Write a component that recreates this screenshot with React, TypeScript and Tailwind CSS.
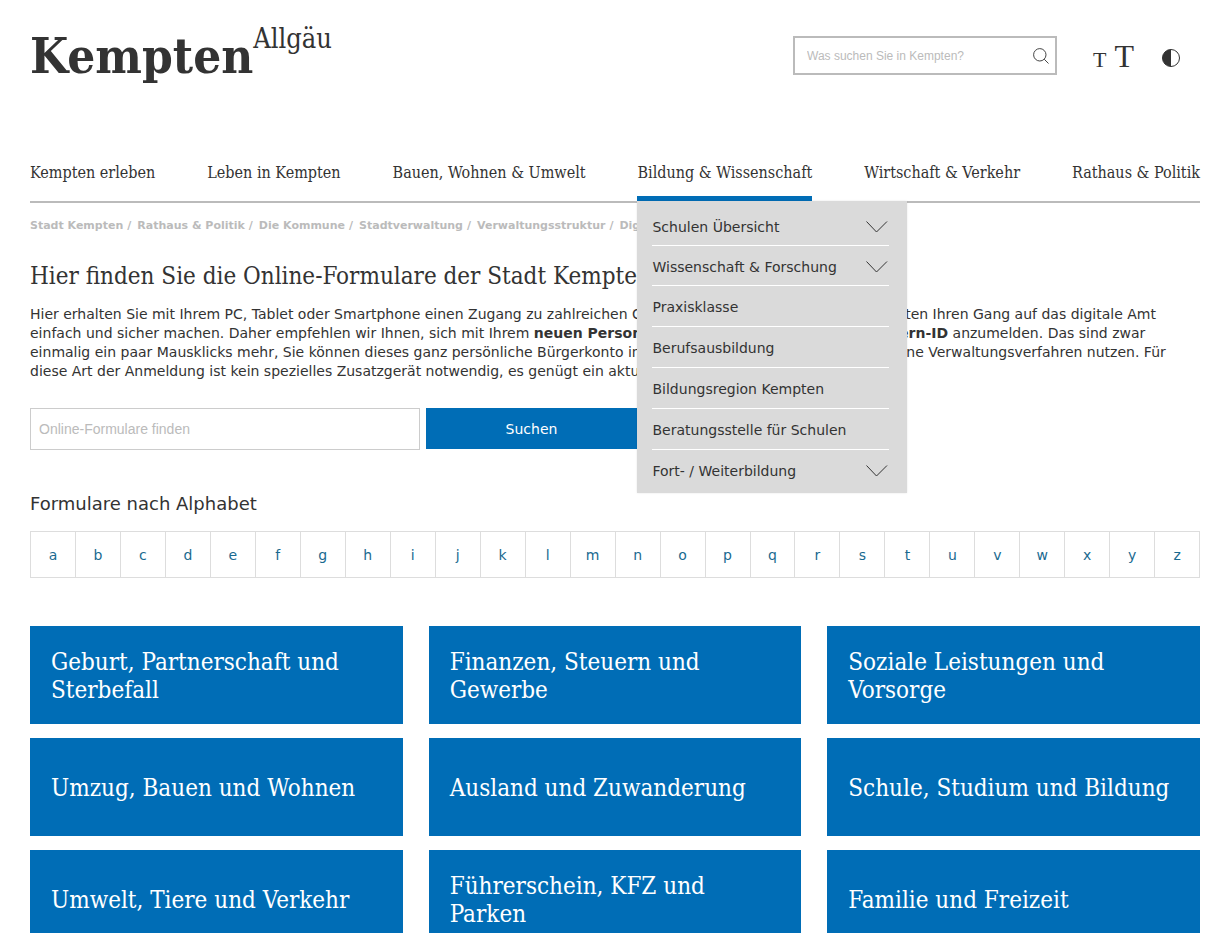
import { useState } from "react";

const serif = "font-['DejaVu_Serif_Condensed','Liberation_Serif',serif]";
const sans = "font-['DejaVu_Sans',sans-serif]";

const navItems = [
  "Kempten erleben",
  "Leben in Kempten",
  "Bauen, Wohnen & Umwelt",
  "Bildung & Wissenschaft",
  "Wirtschaft & Verkehr",
  "Rathaus & Politik",
];

const menuItems = [
  { label: "Schulen Übersicht", expandable: true },
  { label: "Wissenschaft & Forschung", expandable: true },
  { label: "Praxisklasse", expandable: false },
  { label: "Berufsausbildung", expandable: false },
  { label: "Bildungsregion Kempten", expandable: false },
  { label: "Beratungsstelle für Schulen", expandable: false },
  { label: "Fort- / Weiterbildung", expandable: true },
];

const crumbs = [
  "Stadt Kempten",
  "Rathaus & Politik",
  "Die Kommune",
  "Stadtverwaltung",
  "Verwaltungsstruktur",
  "Digitales Amt",
];

const topics = [
  "Geburt, Partnerschaft und Sterbefall",
  "Finanzen, Steuern und Gewerbe",
  "Soziale Leistungen und Vorsorge",
  "Umzug, Bauen und Wohnen",
  "Ausland und Zuwanderung",
  "Schule, Studium und Bildung",
  "Umwelt, Tiere und Verkehr",
  "Führerschein, KFZ und Parken",
  "Familie und Freizeit",
];

function Chevron() {
  return (
    <svg width="22" height="12" viewBox="0 0 22 12" fill="none" stroke="#333" strokeWidth="1" aria-hidden="true">
      <path d="M0.5 0.5 L10.5 11 L21 0.5" />
    </svg>
  );
}

function Header() {
  return (
    <header className="flex items-start justify-between pt-6">
      <a href="#start" className={`${serif} flex h-16 items-start text-[#333]`}>
        <span className="text-[49px] leading-[64px] font-bold">Kempten</span>
        <span className="text-[27px] leading-[30px]">Allgäu</span>
      </a>
      <div className="flex items-start pt-3">
        <form className="flex h-[39px] w-[264px] items-center border-2 border-[#bbb] pr-1.5 pl-3" onSubmit={(e) => e.preventDefault()}>
          <input
            type="search"
            aria-label="Suche"
            placeholder="Was suchen Sie in Kempten?"
            className="min-w-0 flex-1 font-['Liberation_Sans',sans-serif] text-xs outline-none placeholder:text-[#bbb]"
          />
          <button type="submit" aria-label="Suchen">
            <svg width="16" height="16" viewBox="0 0 16 16" fill="none" stroke="#444" strokeWidth="1" aria-hidden="true">
              <circle cx="6.8" cy="6.8" r="6.2" />
              <path d="M11.2 11.2 L15.5 15.5" />
            </svg>
          </button>
        </form>
        <div className="mt-1 mr-5 ml-9 flex items-center gap-7">
          <div className="flex items-baseline gap-2 font-['Liberation_Serif',serif] text-[#333]">
            <button type="button" aria-label="Schrift verkleinern" className="text-[22px] leading-8">T</button>
            <button type="button" aria-label="Schrift vergrößern" className="text-[32px] leading-8">T</button>
          </div>
          <button type="button" aria-label="Kontrast umschalten">
            <svg width="18" height="18" viewBox="0 0 18 18" aria-hidden="true">
              <circle cx="9" cy="9" r="8.5" fill="white" stroke="#333" />
              <path d="M9 0.5 A8.5 8.5 0 0 0 9 17.5 Z" fill="#333" />
            </svg>
          </button>
        </div>
      </div>
    </header>
  );
}

function DropMenu() {
  return (
    <ul className={`${sans} absolute top-full left-0 z-10 w-[270px] bg-[#dadada] px-[15px] pt-[5px] pb-1 text-sm text-[#333] shadow-[0_0_2px_rgba(0,0,0,0.1)]`}>
      {menuItems.map((item) => (
        <li key={item.label} className="mr-[3px] border-b border-white last:border-b-0">
          <a href="#menu" className={`flex items-center justify-between pt-0.5 pr-px ${item.expandable ? "h-[39px]" : "h-10"}`}>
            {item.label}
            {item.expandable && <Chevron />}
          </a>
        </li>
      ))}
    </ul>
  );
}

function Nav() {
  const [active] = useState("Bildung & Wissenschaft");
  return (
    <nav className="mt-[71px] border-b-2 border-[#bbb]">
      <ul className={`${serif} flex justify-between text-base leading-7 text-[#333]`}>
        {navItems.map((item) => (
          <li key={item} className="relative">
            <a href="#nav" className={`block border-b-[5px] pb-[9px] whitespace-nowrap ${item === active ? "border-[#006db6]" : "border-transparent"}`}>
              {item}
            </a>
            {item === active && <DropMenu />}
          </li>
        ))}
      </ul>
    </nav>
  );
}

export default function App() {
  return (
    <div className={`${sans} min-h-screen bg-white pr-8 pl-[30px] text-[#333]`}>
      <Header />
      <Nav />
      <main>
        <ol className="mt-[15px] flex gap-1.5 text-[11px] leading-4 font-bold whitespace-nowrap text-[#bbb]">
          {crumbs.map((crumb, i) => (
            <li key={crumb}>
              <a href="#crumb">{crumb}</a>
              {i < crumbs.length - 1 && <span className="ml-1">/</span>}
            </li>
          ))}
        </ol>
        <h1 className={`${serif} mt-6 text-2xl leading-9`}>
          Hier finden Sie die Online-Formulare der Stadt Kempten
        </h1>
        <p className="mt-[11px] text-sm leading-[19px]">
          Hier erhalten Sie mit Ihrem PC, Tablet oder Smartphone einen Zugang zu zahlreichen Online-Dienstleistungen. Wir
          alle möchten Ihren Gang auf das digitale Amt einfach und sicher machen. Daher empfehlen wir Ihnen, sich mit
          Ihrem <strong>neuen Personalausweis oder auch mit der Bayern-ID</strong> anzumelden. Das sind zwar einmalig ein
          paar Mausklicks mehr, Sie können dieses ganz persönliche Bürgerkonto in Zukunft auch für mehrere verschiedene
          Verwaltungsverfahren nutzen. Für diese Art der Anmeldung ist kein spezielles Zusatzgerät notwendig, es genügt
          ein aktuelles Smartphone.
        </p>
        <form className="mt-[27px] flex gap-1.5" onSubmit={(e) => e.preventDefault()}>
          <input
            type="text"
            aria-label="Online-Formulare finden"
            placeholder="Online-Formulare finden"
            className="h-[42px] w-1/3 border border-[#ccc] px-2 font-['Liberation_Sans',sans-serif] text-sm outline-none placeholder:text-[#bbb]"
          />
          <button type="submit" className="h-[41px] w-[211px] bg-[#006db6] text-sm text-white">
            Suchen
          </button>
        </form>
        <h2 className="mt-10 text-lg leading-7">Formulare nach Alphabet</h2>
        <ul className="mt-[13px] flex border border-[#ddd]">
          {"abcdefghijklmnopqrstuvwxyz".split("").map((letter) => (
            <li key={letter} className="flex-1 border-r border-[#ddd] last:border-r-0">
              <a href="#buchstabe" className="flex h-[45px] items-center justify-center text-sm text-[#1a6a90]">
                {letter}
              </a>
            </li>
          ))}
        </ul>
        <div className="mt-12 grid grid-cols-3 gap-x-[26px] gap-y-[14px]">
          {topics.map((topic) => (
            <a key={topic} href="#thema" className={`${serif} flex h-[98px] items-center bg-[#006db6] px-[21px] pt-0.5 text-2xl leading-7 text-white`}>
              {topic}
            </a>
          ))}
        </div>
      </main>
    </div>
  );
}
